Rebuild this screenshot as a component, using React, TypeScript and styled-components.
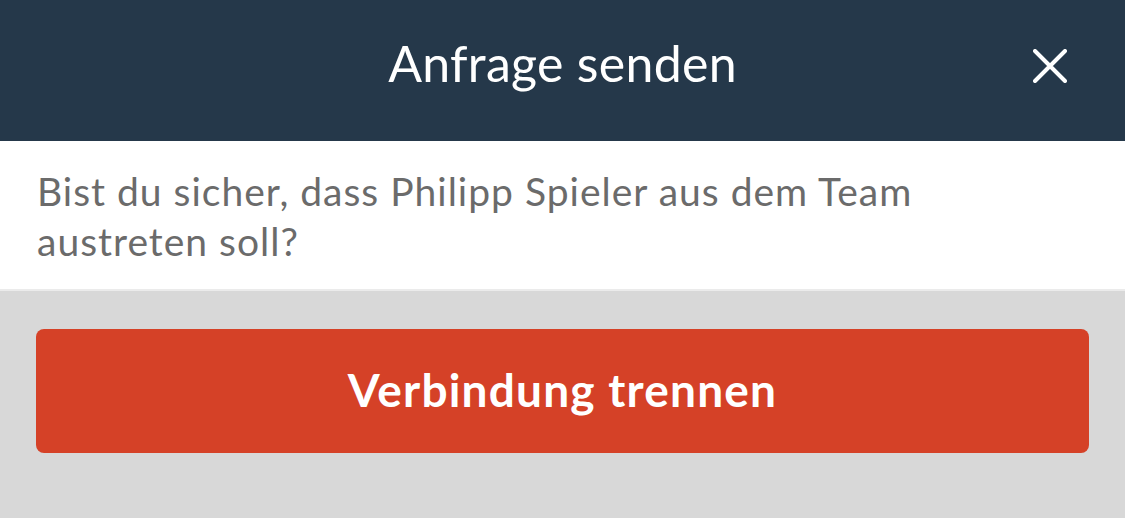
import styled, { createGlobalStyle } from "styled-components";

const GlobalStyle = createGlobalStyle`
  html, body {
    margin: 0;
    padding: 0;
    background: #d8d8d8;
    font-family: Lato, "Liberation Sans", sans-serif;
  }
`;

const Sheet = styled.div`
  width: 1125px;
  height: 518px;
  display: flex;
  flex-direction: column;
  background: #d8d8d8;
  overflow: hidden;
`;

const Header = styled.header`
  height: 141px;
  background: #25384a;
  display: flex;
  align-items: center;
  justify-content: center;
  position: relative;
`;

const Title = styled.h1`
  margin: 0;
  color: #ffffff;
  font-size: 50px;
  font-weight: 400;
  letter-spacing: 0.3px;
  padding-bottom: 15px;
`;

const CloseButton = styled.button`
  position: absolute;
  right: 55px;
  top: 46px;
  width: 40px;
  height: 40px;
  padding: 0;
  border: none;
  background: none;
  display: flex;
  align-items: center;
  justify-content: center;
  cursor: pointer;
`;

const Body = styled.div`
  background: #ffffff;
  padding: 25px 37px 0;
  height: 150px;
  box-sizing: border-box;
  border-bottom: 2px solid #ebebeb;
`;

const Message = styled.p`
  margin: 0;
  color: #6b6b6b;
  font-size: 39px;
  line-height: 50px;
  letter-spacing: 1px;
  max-width: 960px;
`;

const Actions = styled.div`
  padding: 38px 36px 0;
`;

const DangerButton = styled.button`
  width: 100%;
  height: 124px;
  border: none;
  border-radius: 8px;
  background: #d54127;
  color: #ffffff;
  font-family: Lato, "Liberation Sans", sans-serif;
  font-size: 46px;
  font-weight: 700;
  letter-spacing: 1.2px;
  cursor: pointer;
  padding: 0 0 4px;
`;

export default function App() {
  return (
    <>
      <GlobalStyle />
      <Sheet>
        <Header>
          <Title>Anfrage senden</Title>
          <CloseButton aria-label="Schließen">
            <svg width="34" height="34" viewBox="0 0 34 34">
              <path
                d="M2 2 L32 32 M32 2 L2 32"
                stroke="#ffffff"
                strokeWidth="4"
                strokeLinecap="round"
              />
            </svg>
          </CloseButton>
        </Header>
        <Body>
          <Message>
            Bist du sicher, dass Philipp Spieler aus dem Team austreten soll?
          </Message>
        </Body>
        <Actions>
          <DangerButton>Verbindung trennen</DangerButton>
        </Actions>
      </Sheet>
    </>
  );
}
